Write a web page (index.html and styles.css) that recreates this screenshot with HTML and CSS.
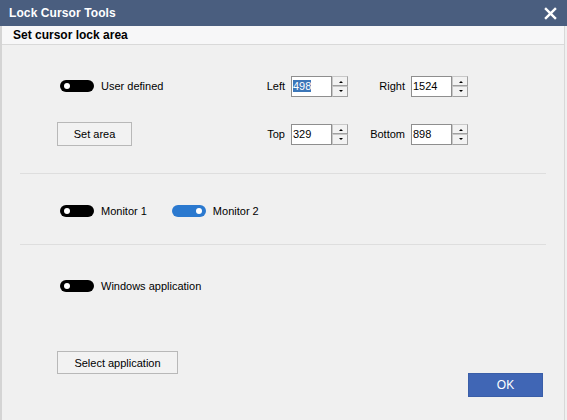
FILE: index.html
```html
<!DOCTYPE html>
<html>
<head>
<meta charset="utf-8">
<link rel="stylesheet" href="styles.css">
</head>
<body>
<div class="window">
  <div class="titlebar">
    <span class="title">Lock Cursor Tools</span>
    <svg class="close" width="12" height="12" viewBox="0 0 12 12"><path d="M1 1 L11 11 M11 1 L1 11" stroke="#fff" stroke-width="2.2" fill="none"/></svg>
  </div>
  <div class="content">
    <div class="tabhead">Set cursor lock area</div>
    <div class="section s1">
      <div class="grid">
        <div class="opt"><span class="toggle"></span><span>User defined</span></div>
        <label class="lbl">Left</label>
        <div class="spin"><div class="field"><span class="sel">498</span></div><div class="arrows"><span class="up"></span><span class="dn"></span></div></div>
        <label class="lbl">Right</label>
        <div class="spin"><div class="field">1524</div><div class="arrows"><span class="up"></span><span class="dn"></span></div></div>

        <div><button class="btn setarea">Set area</button></div>
        <label class="lbl">Top</label>
        <div class="spin"><div class="field">329</div><div class="arrows"><span class="up"></span><span class="dn"></span></div></div>
        <label class="lbl">Bottom</label>
        <div class="spin"><div class="field">898</div><div class="arrows"><span class="up"></span><span class="dn"></span></div></div>
      </div>
    </div>
    <div class="section s2">
      <div class="opt"><span class="toggle"></span><span>Monitor 1</span></div>
      <div class="opt"><span class="toggle on"></span><span>Monitor 2</span></div>
    </div>
    <div class="section s3">
      <div class="opt"><span class="toggle"></span><span>Windows application</span></div>
      <button class="btn selapp">Select application</button>
    </div>
    <div class="footer">
      <button class="ok">OK</button>
    </div>
  </div>
</div>
</body>
</html>
```
FILE: styles.css
```css
* { box-sizing: border-box; }
html, body { margin: 0; padding: 0; }
body {
  width: 567px;
  height: 420px;
  overflow: hidden;
  font-family: "Liberation Sans", Arial, sans-serif;
  font-size: 11px;
  color: #000;
  background: #f0f0f0;
}
.window {
  width: 567px;
  height: 420px;
  display: flex;
  flex-direction: column;
}
.titlebar {
  height: 26px;
  flex: none;
  background: #4a5e7f;
  display: flex;
  align-items: center;
  justify-content: space-between;
  padding: 0 10px 0 9px;
}
.title {
  color: #fff;
  font-weight: bold;
  font-size: 12px;
  letter-spacing: 0.1px;
}
.close { display: block; width: 13px; height: 13px; }
.content {
  flex: 1;
  border-left: 2px solid #d4d4d4;
  border-right: 1px solid #d8d8d8;
  margin-right: 2px;
  background: #f0f0f0;
  display: flex;
  flex-direction: column;
}
.tabhead {
  height: 19px;
  background: #f7f7f8;
  border-bottom: 1px solid #d9d9d9;
  font-weight: bold;
  font-size: 12px;
  padding: 2px 0 0 11px;
}
.section { padding-left: 55px; }
.s1 { padding-top: 29px; padding-bottom: 27px; }
.grid {
  display: grid;
  grid-template-columns: 180px 42px 57px 51px 57px;
  grid-template-rows: 24px 24px;
  column-gap: 6px;
  row-gap: 24px;
  align-items: center;
}
.lbl { text-align: right; }
.opt {
  display: flex;
  align-items: center;
  gap: 7px;
  height: 24px;
}
.toggle {
  width: 34px;
  height: 12px;
  border-radius: 6px;
  background: #000;
  position: relative;
  margin-left: 3px;
}
.toggle::after {
  content: "";
  position: absolute;
  left: 4px;
  top: 3px;
  width: 6px;
  height: 6px;
  border-radius: 50%;
  background: #fff;
}
.toggle.on { background: #2b79cf; }
.toggle.on::after { left: auto; right: 4px; }
.spin {
  display: flex;
  height: 21px;
}
.field {
  width: 41px;
  height: 21px;
  background: #fff;
  border: 1px solid #8e8e8e;
  padding: 2px 0 0 1px;
  line-height: 15px;
}
.sel { background: #3b76b8; color: #fff; }
.arrows {
  width: 16px;
  display: flex;
  flex-direction: column;
}
.arrows span {
  flex: 1;
  background: #f2f2f2;
  border: 1px solid #c8c8c8;
  border-right-color: #a0a0a0;
  border-bottom-color: #a0a0a0;
  position: relative;
}
.arrows span::after {
  content: "";
  position: absolute;
  left: 6px;
  top: 4px;
  border-left: 2px solid transparent;
  border-right: 2px solid transparent;
}
.arrows .up::after { border-bottom: 2px solid #000; }
.arrows .dn::after { border-top: 2px solid #000; top: 3px; }
.btn {
  font-family: "Liberation Sans", Arial, sans-serif;
  font-size: 11px;
  color: #000;
  background: #f2f2f2;
  border: 1px solid #b8b8b8;
  height: 24px;
  padding: 0;
  display: block;
}
.setarea { width: 75px; }
.s2 {
  margin: 0 18px;
  padding: 25px 0 21px 37px;
  border-top: 1px solid #dedede;
  border-bottom: 1px solid #dedede;
  display: flex;
  gap: 22px;
}
.s2 .opt { gap: 7px; }
.s3 { padding-top: 29px; }
.selapp { width: 121px; height: 23px; margin-top: 53px; }
.footer {
  display: flex;
  justify-content: flex-end;
  padding-right: 21px;
  margin-top: -1px;
}
.ok {
  width: 75px;
  height: 24px;
  background: #4066b5;
  color: #fff;
  border: 1px solid #3a5ea8;
  font-family: "Liberation Sans", Arial, sans-serif;
  font-size: 12px;
  padding: 0;
}
```
